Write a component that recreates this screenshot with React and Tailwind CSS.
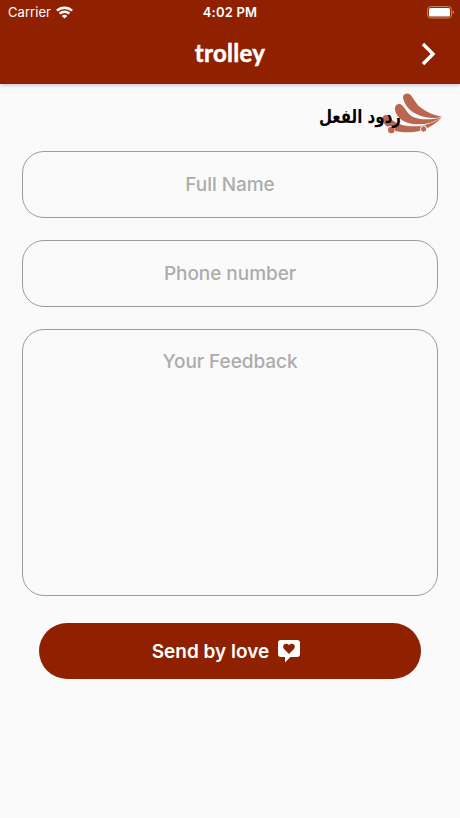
import { useState } from "react";

const fields = [
  { name: "fullName", placeholder: "Full Name" },
  { name: "phone", placeholder: "Phone number" },
];

const fieldClass =
  "block w-full rounded-[22px] border border-[#9c9c9c] bg-transparent text-center font-['Inter',sans-serif] text-[19px] font-medium tracking-[-0.05px] text-gray-800 outline-none placeholder:text-[#acacac]";

function WifiIcon() {
  return (
    <svg viewBox="0 0 17 13" className="h-[13px] w-[17px]" fill="none" stroke="white">
      <path d="M.9 4.7C5.2.6 11.8.6 16.1 4.7" strokeWidth="2.5" />
      <path d="M3.6 7.7c2.8-2.6 7-2.6 9.8 0" strokeWidth="2.3" />
      <path d="M8.5 12.6 5.7 9.9c1.6-1.4 4-1.4 5.6 0z" fill="white" stroke="none" />
    </svg>
  );
}

function BatteryIcon() {
  return (
    <svg viewBox="0 0 28 13" className="h-[13px] w-[28px]">
      <rect x="0.6" y="0.6" width="23.8" height="11.4" rx="3" fill="none" stroke="#c98a76" strokeWidth="1" />
      <rect x="2" y="2" width="21" height="8.6" rx="1.6" fill="white" />
      <path d="M25.7 4.3c1.7.6 1.7 3.4 0 4z" fill="#c98a76" />
    </svg>
  );
}

function WingIcon() {
  return (
    <svg viewBox="244 20 184 130" className="absolute top-[8px] right-[17px] h-[43.3px] w-[61.3px]" fill="#bb6750">
      <path d="M308 42C302 26 322 18 332 31C346 50 348 58 363 69C380 82 403 91 425 95C407 100 391 99 372 95C335 86 316 68 308 42Z" />
      <path d="M283 74C280 56 298 51 306 61C316 73 322 86 336 94C360 106 394 102 422 97C400 110 376 118 351 117C314 116 288 100 283 74Z" />
      <path d="M246 96C249 86 261 87 268 97C280 113 307 122 338 123C369 124 400 111 424 97C405 115 388 126 368 133C342 143 309 143 284 137C284 122 270 120 260 124C250 117 244 107 246 96Z" />
      <circle cx="272" cy="134" r="10" />
      <circle cx="369" cy="131" r="9.5" stroke="#fafafa" strokeWidth="3" />
    </svg>
  );
}

function LoveMessageIcon() {
  return (
    <svg viewBox="0 0 22 23" className="h-[23px] w-[22px]">
      <path
        d="M3 0h16a3 3 0 0 1 3 3v11a3 3 0 0 1-3 3h-6.6L7 22.4V17H3a3 3 0 0 1-3-3V3a3 3 0 0 1 3-3Z"
        fill="white"
      />
      <path
        d="M11 14 6.3 9.3C3 5.8 7.6 1.6 11 5.2c3.4-3.6 8 .6 4.7 4.1z"
        fill="#8f2100"
      />
    </svg>
  );
}

export default function App() {
  const [form, setForm] = useState({ fullName: "", phone: "", feedback: "" });

  const handleChange = (e) => setForm({ ...form, [e.target.name]: e.target.value });

  return (
    <main className="flex h-[818px] w-full flex-col bg-[#fafafa] font-['Inter',sans-serif]">
      <header className="h-[84px] shrink-0 bg-[#8f2100] text-white shadow-[0_1px_4px_rgba(60,30,90,0.3)]">
        <div className="grid h-6 grid-cols-3 items-center pr-[5px] pl-2 text-[13px]">
          <div className="flex items-center gap-[5px] tracking-[0.05px]">
            <span className="pt-px">Carrier</span>
            <WifiIcon />
          </div>
          <span className="pt-px pr-[3px] text-center font-semibold tracking-[0.2px]">4:02 PM</span>
          <div className="flex justify-end">
            <BatteryIcon />
          </div>
        </div>
        <div className="grid h-[60px] grid-cols-3 items-center">
          <h1 className="col-start-2 pb-[3px] text-center font-['Lato',sans-serif] text-[24px] leading-[57px] font-bold tracking-[0.3px] [-webkit-text-stroke:0.5px_white]">
            trolley
          </h1>
          <button type="button" aria-label="Next" className="mr-[24px] justify-self-end">
            <svg viewBox="0 0 15 24" className="h-6 w-[15px]" fill="none" stroke="white" strokeWidth="3.4">
              <path d="m2 2 10 10L2 22" />
            </svg>
          </button>
        </div>
      </header>

      <div className="relative h-[67px] shrink-0">
        <WingIcon />
        <h2
          dir="rtl"
          className="relative mr-[59px] origin-right scale-x-[0.79] pt-[17px] font-['DejaVu_Sans',sans-serif] text-[19px] leading-[30px] font-bold text-black"
        >
          ردود الفعل
        </h2>
      </div>

      <form className="px-[22px]" onSubmit={(e) => e.preventDefault()}>
        {fields.map((field) => (
          <input
            key={field.name}
            name={field.name}
            value={form[field.name]}
            onChange={handleChange}
            placeholder={field.placeholder}
            className={`${fieldClass} mb-[22px] h-[67px]`}
          />
        ))}
        <textarea
          name="feedback"
          value={form.feedback}
          onChange={handleChange}
          placeholder="Your Feedback"
          className={`${fieldClass} h-[267px] resize-none pt-[19px] leading-[26px]`}
        />
        <button
          type="submit"
          className="mx-[17px] mt-[27px] flex h-[56px] w-[382px] items-center justify-center gap-[9px] rounded-full bg-[#8f2100] pr-[8px] text-[19px] font-semibold text-white"
        >
          <span className="pt-[3px]">Send by love</span>
          <LoveMessageIcon />
        </button>
      </form>
    </main>
  );
}
